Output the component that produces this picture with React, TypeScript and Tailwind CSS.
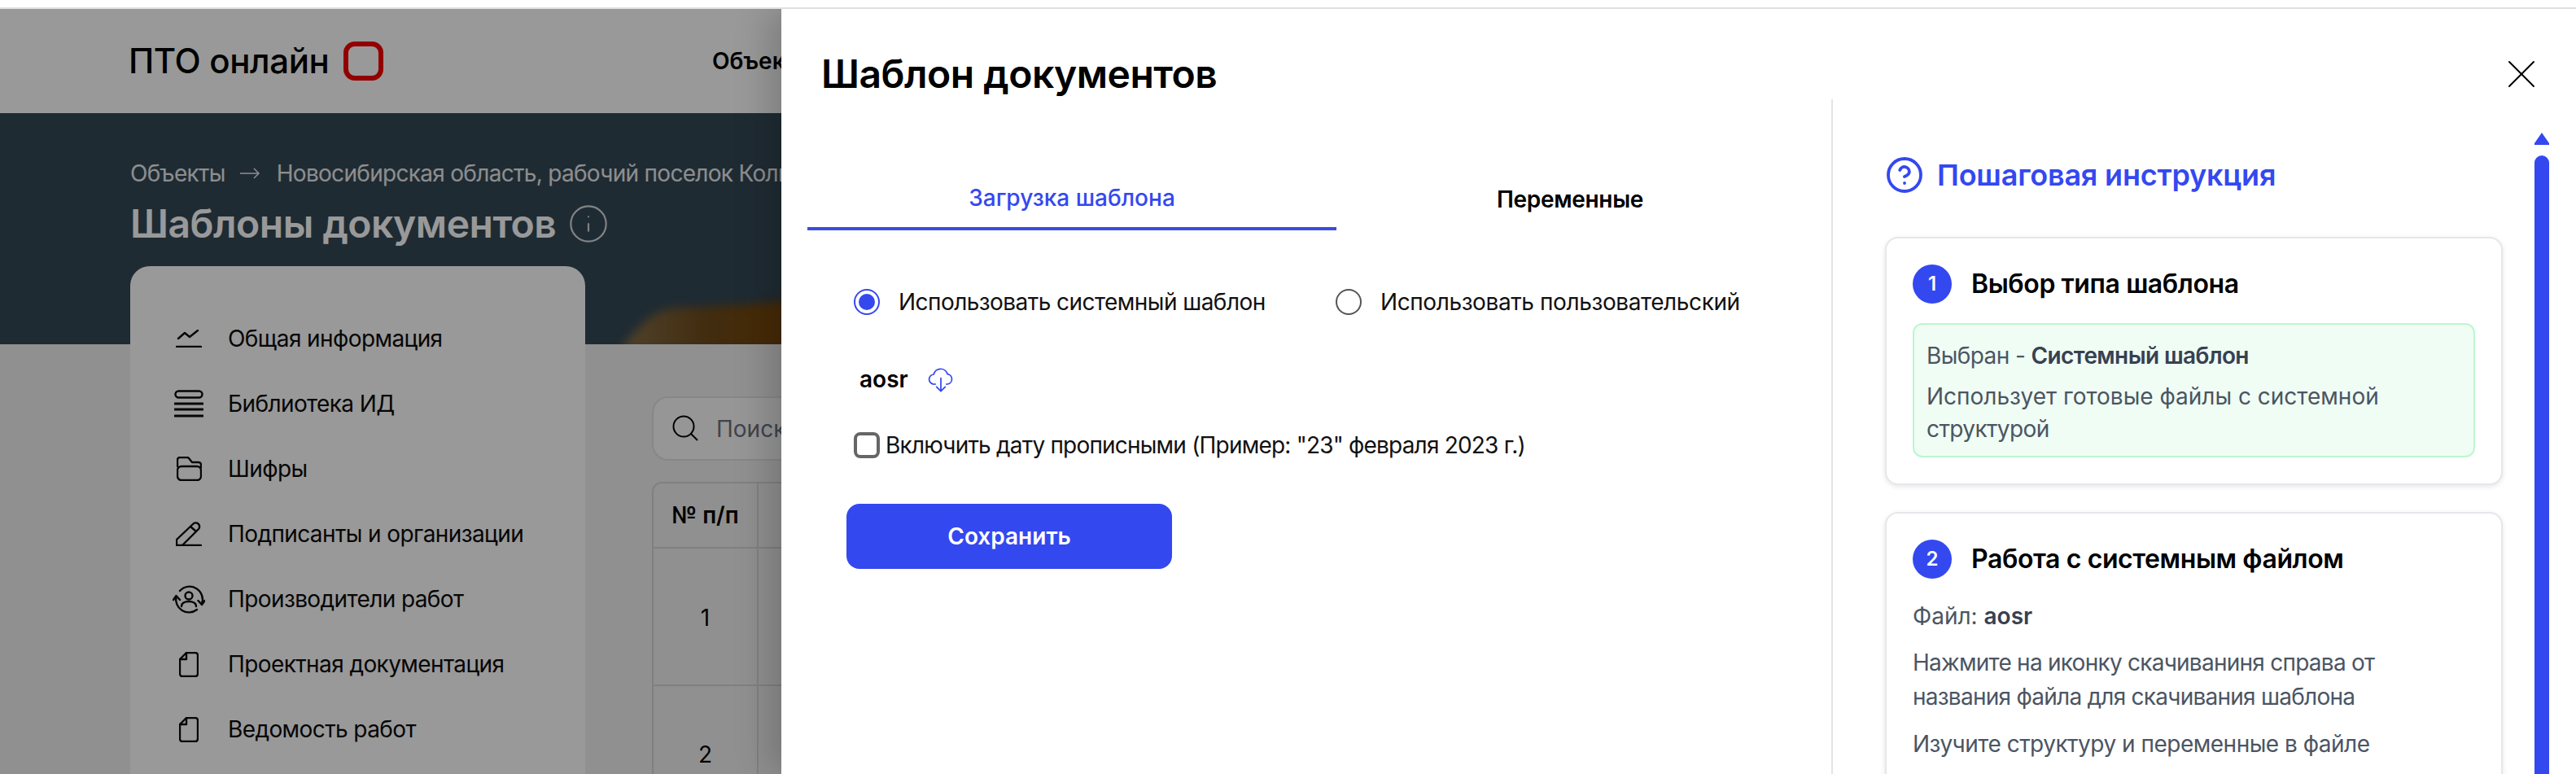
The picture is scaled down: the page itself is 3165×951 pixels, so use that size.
import React from "react";
import { CircleHelp, Info, X } from "lucide-react";

const FONT = "font-['Inter','Noto_Sans',sans-serif]";

const icons: Record<string, React.ReactNode> = {
  chart: (
    <>
      <path d="M3 11l8-7 6 5 10-8" />
      <path d="M1 21h30" />
    </>
  ),
  stack: (
    <>
      <rect x="1.5" y="1.5" width="33" height="8" rx="4" />
      <path d="M1 17h34M1 24h34M1 32h34" strokeWidth="3" />
    </>
  ),
  folder: (
    <>
      <path d="M1 12V4a3 3 0 0 1 3-3h9a3 3 0 0 1 2 1l4 5h8a3 3 0 0 1 3 3v3" />
      <rect x="1" y="12" width="29" height="17" rx="5" />
    </>
  ),
  pen: (
    <>
      <path d="M1 29v-7L21 3a4.5 4.5 0 0 1 7 6L8 29" />
      <path d="M18 6l7 6" />
      <path d="M1 29h30" />
    </>
  ),
  person: (
    <>
      <path d="M9 8A16 16 0 0 1 36 24" />
      <path d="M4.5 15A16 16 0 0 0 30 31" />
      <path d="M1 19l3.5-5 4.5 5" />
      <path d="M31.5 20l4.5 5 3.5-5" />
      <circle cx="20" cy="14" r="4.5" />
      <path d="M11 27c0-4 4-6 9-6s9 2 9 6" />
    </>
  ),
  doc: (
    <>
      <path d="M9 1h11a3 3 0 0 1 3 3v23a3 3 0 0 1-3 3H4a3 3 0 0 1-3-3V9z" />
      <path d="M1 9h8V1" />
    </>
  ),
};

const menu = [
  { label: "Общая информация", icon: "chart", w: 32, h: 22 },
  { label: "Библиотека ИД", icon: "stack", w: 36, h: 34 },
  { label: "Шифры", icon: "folder", w: 31, h: 30 },
  { label: "Подписанты и организации", icon: "pen", w: 32, h: 30 },
  { label: "Производители работ", icon: "person", w: 40, h: 37 },
  { label: "Проектная документация", icon: "doc", w: 24, h: 31 },
  { label: "Ведомость работ", icon: "doc", w: 24, h: 31 },
];

function MenuIcon({ name, w, h }: { name: string; w: number; h: number }) {
  return (
    <svg width={w} height={h} viewBox={`0 0 ${w} ${h}`} fill="none" stroke="currentColor" strokeWidth="2.4" strokeLinecap="round" strokeLinejoin="round">
      {icons[name]}
    </svg>
  );
}

function Page() {
  return (
    <div className="bg-[#f1f1f1]">
      <header className="h-[128px] bg-white flex items-center pl-[158px]">
        <span className="text-[42px] leading-none font-medium tracking-[-0.4px] text-black w-[264px]">ПТО онлайн</span>
        <span className="w-[49px] h-[48px] rounded-[14px] border-[6px] border-[#f50000]"></span>
        <span className="ml-[404px] text-[28px] font-semibold text-black">Объекты</span>
      </header>
      <section className="relative h-[284px] bg-[#344855] overflow-hidden pl-[160px] pt-[54px]">
        <svg className="absolute left-0 top-0 blur-[6px]" width="1000" height="290" viewBox="0 0 1000 290">
          <defs>
            <linearGradient id="spot" x1="0" y1="0" x2="1" y2="0">
              <stop offset="0" stopColor="#86704a" />
              <stop offset="0.45" stopColor="#6e4a1a" />
              <stop offset="1" stopColor="#7a4400" />
            </linearGradient>
          </defs>
          <path d="M762 290C790 255 805 240 835 239C880 238 930 234 1000 228V290Z" fill="url(#spot)" />
        </svg>
        <div className="relative flex items-center text-[28px] leading-[40px] tracking-[-0.7px] text-white/90 whitespace-nowrap">
          <span>Объекты</span>
          <svg className="ml-[18px] mr-[21px]" width="24" height="14" viewBox="0 0 24 14" fill="none" stroke="currentColor" strokeWidth="1.5">
            <path d="M0 7h23M17 1l6 6-6 6" />
          </svg>
          <span>Новосибирская область, рабочий поселок Кольцово</span>
        </div>
        <div className="relative mt-[12px] flex items-center gap-[14px]">
          <h1 className="text-[48px] leading-[60px] tracking-[-0.5px] font-semibold text-white">Шаблоны документов</h1>
          <Info size={52} strokeWidth={1} className="text-white/80" />
        </div>
      </section>
      <div className="flex -mt-[96px] pl-[160px] gap-[82px] h-[700px]">
        <nav className="relative w-[559px] bg-white rounded-[24px] pt-[59px] pl-[47px] shrink-0">
          {menu.map((m) => (
            <div key={m.label} className="h-[80px] -mt-[10px] mb-[10px] flex items-center gap-[23px] text-[28px] tracking-[-0.6px] text-[#0a0a0a]">
              <span className="w-[50px] flex justify-center">
                <MenuIcon name={m.icon} w={m.w} h={m.h} />
              </span>
              {m.label}
            </div>
          ))}
        </nav>
        <main className="pt-[160px] w-[1400px] shrink-0">
          <div className="h-[79px] rounded-[20px] border-2 border-[#e2e2e2] bg-[#fafafa] flex items-center pl-[22px] gap-[19px] text-[28px] text-[#6b7280]">
            <svg width="36" height="36" viewBox="0 0 36 36" fill="none" stroke="#000" strokeWidth="2">
              <circle cx="15" cy="15" r="12.5" />
              <path d="M24 24l8 8" />
            </svg>
            Поиск
          </div>
          <div className="mt-[26px] grid grid-cols-[129px_1fr] border-l-2 border-t-2 border-[#d6d6d6] rounded-tl-[12px] text-black">
            <div className="h-[80px] flex items-center justify-center border-r-2 border-b-2 border-[#d6d6d6] font-semibold text-[28px]">№ п/п</div>
            <div className="h-[80px] border-b-2 border-[#d6d6d6]"></div>
            <div className="h-[169px] pt-[2px] flex items-center justify-center border-r-2 border-b-2 border-[#d6d6d6] text-[28px]">1</div>
            <div className="h-[169px] border-b-2 border-[#d6d6d6]"></div>
            <div className="h-[169px] flex items-center justify-center border-r-2 border-b-2 border-[#d6d6d6] text-[28px]">2</div>
            <div className="h-[169px] border-b-2 border-[#d6d6d6]"></div>
          </div>
        </main>
      </div>
    </div>
  );
}

function Step({ n, title, children }: { n: number; title: string; children: React.ReactNode }) {
  return (
    <div className="border-2 border-[#e5e7eb] rounded-[16px] bg-white shadow-[0_2px_6px_rgba(0,0,0,0.1)] p-[32px]">
      <div className="flex items-center gap-[24px]">
        <span className="w-[48px] h-[48px] rounded-full bg-[#3448f0] text-white text-[24px] font-semibold flex items-center justify-center">{n}</span>
        <span className="text-[32px] font-semibold tracking-[-0.4px] text-black">{title}</span>
      </div>
      {children}
    </div>
  );
}

function Drawer() {
  return (
    <aside className="absolute left-[960px] right-0 top-0 bottom-0 bg-white overflow-hidden shadow-[-16px_0_40px_rgba(0,0,0,0.18)]">
      <div className="h-[111px] relative pl-[49px] pt-[51px]">
        <h2 className="text-[48px] leading-[58px] font-semibold tracking-[-0.5px] text-black">Шаблон документов</h2>
        <X size={60} strokeWidth={0.8} className="absolute left-[2108px] top-[50px] text-black" />
      </div>
      <div className="flex h-[900px]">
        <div className="w-[1290px] shrink-0 pl-[32px] pt-[85px]">
          <div className="flex text-[28px] font-medium">
            <div className="w-[650px] h-[76px] flex items-center justify-center border-b-4 border-[#3a4de0] text-[#3448f0]">Загрузка шаблона</div>
            <div className="w-[574px] h-[76px] flex items-center justify-center font-semibold tracking-[-0.3px] text-black">Переменные</div>
          </div>
          <div className="pl-[48px] text-[28px] text-[#111]">
            <div className="mt-[72px] ml-[9px] flex items-center h-[32px]">
              <span className="w-[32px] h-[32px] rounded-full border-2 border-[#3448f0] flex items-center justify-center">
                <span className="w-[20px] h-[20px] rounded-full bg-[#3448f0]"></span>
              </span>
              <span className="ml-[23px] w-[537px] tracking-[-0.55px]">Использовать системный шаблон</span>
              <span className="w-[32px] h-[32px] rounded-full border-2 border-[#555]"></span>
              <span className="ml-[23px] tracking-[-0.4px]">Использовать пользовательский</span>
            </div>
            <div className="mt-[63px] ml-[16px] flex items-center h-[32px] gap-[24px]">
              <b className="font-semibold text-black">aosr</b>
              <svg width="32" height="32" viewBox="0 0 24 24" fill="none" stroke="#3448f0" strokeWidth="1.3" strokeLinecap="round" strokeLinejoin="round">
                <path d="M7 16.5H6a4.5 4.5 0 0 1-.6-9A6.5 6.5 0 0 1 18 7.2a4.7 4.7 0 0 1 .2 9.3H17" />
                <path d="M12 11v12M8 19l4 4 4-4" />
              </svg>
            </div>
            <div className="mt-[49px] ml-[9px] flex items-center h-[32px] gap-[7px] tracking-[-0.8px]">
              <span className="w-[32px] h-[32px] rounded-[8px] border-[4px] border-[#666]"></span>
              Включить дату прописными (Пример: "23" февраля 2023 г.)
            </div>
            <button className="mt-[56px] w-[400px] h-[80px] rounded-[16px] bg-[#3448f0] text-white font-semibold text-[28px]">Сохранить</button>
          </div>
        </div>
        <div className="flex-1 border-l-2 border-[#e5e5e5] pl-[64px] flex items-start">
          <div className="w-[759px] shrink-0 pt-[73px]">
            <div className="flex items-center gap-[16px] h-[40px] text-[#3448f0]">
              <CircleHelp size={48} strokeWidth={1.9} />
              <span className="text-[36px] font-semibold tracking-[-0.2px]">Пошаговая инструкция</span>
            </div>
            <div className="mt-[56px] flex flex-col gap-[33px] text-[28px] leading-[40px] text-[#4b5563]">
              <Step n={1} title="Выбор типа шаблона">
                <div className="mt-[24px] bg-[#f0fdf4] border-2 border-[#bbf7d0] rounded-[12px] pl-[15px] pr-[16px] pt-[18px] pb-[13px]">
                  <p className="tracking-[-0.6px]">Выбран - <b className="font-semibold text-[#374151]">Системный шаблон</b></p>
                  <p className="mt-[10px]">Использует готовые файлы с системной <span className="tracking-[-0.6px]">структурой</span></p>
                </div>
              </Step>
              <Step n={2} title="Работа с системным файлом">
                <p className="mt-[26px]">Файл: <b className="font-semibold text-[#374151]">aosr</b></p>
                <p className="mt-[16px] leading-[42px] w-[640px] tracking-[-0.75px]">Нажмите на иконку скачиваниня справа от названия файла для скачивания шаблона</p>
                <p className="mt-[16px] leading-[42px] tracking-[-0.5px]">Изучите структуру и переменные в файле</p>
              </Step>
            </div>
          </div>
          <div className="ml-[39px] w-[18px] pt-[41px] flex flex-col h-full">
            <svg width="18" height="15" viewBox="0 0 18 15" fill="#3448f0">
              <path d="M9 0l9 13v2H0v-2z" />
            </svg>
            <div className="mt-[13px] flex-1 bg-[#3448f0] rounded-t-full"></div>
          </div>
        </div>
      </div>
    </aside>
  );
}

export default function App() {
  return (
    <div className={`${FONT} h-[951px] w-[3165px] overflow-hidden bg-white`}>
      <div className="h-[9px] bg-white"></div>
      <div className="h-[2px] bg-[#e0e0e0]"></div>
      <div className="relative h-[940px] overflow-hidden">
        <Page />
        <div className="absolute inset-0 bg-black/40"></div>
        <Drawer />
      </div>
    </div>
  );
}
